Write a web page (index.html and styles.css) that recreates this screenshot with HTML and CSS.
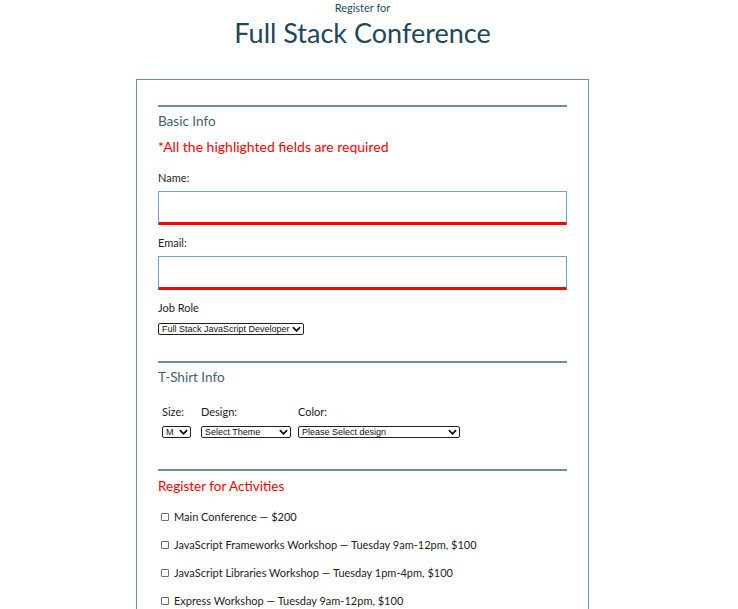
FILE: index.html
```html
<!DOCTYPE html>
<html lang="en">
<head>
<meta charset="utf-8">
<title>Register for Full Stack Conference</title>
<link rel="stylesheet" href="styles.css">
</head>
<body>
<div class="page">
  <header class="header">
    <p class="kicker">Register for</p>
    <h1 class="title">Full Stack Conference</h1>
  </header>
  <form class="form">
    <fieldset class="section">
      <h2 class="legend">Basic Info</h2>
      <p class="error">*All the highlighted fields are required</p>
      <label class="label" for="name">Name:</label>
      <input class="text-input" id="name" type="text">
      <label class="label" for="mail">Email:</label>
      <input class="text-input" id="mail" type="email">
      <label class="label" for="title">Job Role</label>
      <span class="select-wrap">
        <select class="select select-role" id="title">
          <option>Full Stack JavaScript Developer</option>
        </select>
        <svg class="chev" viewBox="0 0 10 6"><path d="M1 1 L5 5 L9 1" /></svg>
      </span>
    </fieldset>
    <fieldset class="section shirt">
      <h2 class="legend">T-Shirt Info</h2>
      <div class="shirt-row">
        <div class="shirt-col shirt-size">
          <label class="label" for="size">Size:</label>
          <span class="select-wrap">
            <select class="select select-size" id="size"><option>M</option></select>
            <svg class="chev" viewBox="0 0 10 6"><path d="M1 1 L5 5 L9 1" /></svg>
          </span>
        </div>
        <div class="shirt-col shirt-design">
          <label class="label" for="design">Design:</label>
          <span class="select-wrap">
            <select class="select select-design" id="design"><option>Select Theme</option></select>
            <svg class="chev" viewBox="0 0 10 6"><path d="M1 1 L5 5 L9 1" /></svg>
          </span>
        </div>
        <div class="shirt-col shirt-color">
          <label class="label" for="color">Color:</label>
          <span class="select-wrap">
            <select class="select select-color" id="color"><option>Please Select design</option></select>
            <svg class="chev" viewBox="0 0 10 6"><path d="M1 1 L5 5 L9 1" /></svg>
          </span>
        </div>
      </div>
    </fieldset>
    <fieldset class="section activities">
      <h2 class="legend legend-error">Register for Activities</h2>
      <label class="activity"><input class="check" type="checkbox"> Main Conference — $200</label>
      <label class="activity"><input class="check" type="checkbox"> JavaScript Frameworks Workshop — Tuesday 9am-12pm, $100</label>
      <label class="activity"><input class="check" type="checkbox"> JavaScript Libraries Workshop — Tuesday 1pm-4pm, $100</label>
      <label class="activity"><input class="check" type="checkbox"> Express Workshop — Tuesday 9am-12pm, $100</label>
      <label class="activity"><input class="check" type="checkbox"> Node.js Workshop — Tuesday 1pm-4pm, $100</label>
    </fieldset>
  </form>
</div>
</body>
</html>
```
FILE: styles.css
```css
html, body {
  margin: 0;
  padding: 0;
  background: #fff;
  overflow: hidden;
}
body {
  width: 725px;
  font-family: "Lato", "Open Sans", sans-serif;
  color: #1f1f1f;
}
.page {
  display: flex;
  flex-direction: column;
  align-items: center;
}
.header {
  text-align: center;
  color: #1f4a5e;
}
.kicker {
  margin: 2px 0 0;
  font-size: 11px;
  line-height: 12px;
}
.title {
  margin: 2px 0 0;
  font-size: 27px;
  font-weight: 400;
  line-height: 34px;
  color: #21475a;
}
.form {
  margin-top: 29px;
  width: 453px;
  border: 1px solid #6a8fa0;
  border-bottom: none;
  padding: 25px 21px 0;
  box-sizing: border-box;
  height: 540px;
}
.section {
  margin: 0;
  padding: 0;
  border: none;
  border-top: 2px solid #6a8fa0;
  display: flex;
  flex-direction: column;
  align-items: flex-start;
}
.section + .section {
  margin-top: 26px;
}
.legend {
  margin: 6px 0 0;
  font-size: 13.5px;
  font-weight: 400;
  line-height: 16px;
  color: #3f5f6f;
}
.legend-error {
  color: #ff0000;
}
.error {
  margin: 10px 0 0;
  font-size: 14px;
  line-height: 16px;
  color: #ff0000;
}
.label {
  display: block;
  margin-top: 11px;
  font-size: 11px;
  line-height: 13px;
  color: #222;
}
.error + .label {
  margin-top: 16px;
}
.text-input {
  display: block;
  width: 100%;
  height: 34px;
  margin: 7px 0 0;
  box-sizing: border-box;
  border: 1px solid #6f9edf;
  border-bottom: 3px solid #ff0000;
  border-radius: 1px;
  padding: 0 8px;
  background: #fff;
}
.select-wrap {
  position: relative;
  display: inline-block;
  margin-top: 9px;
}
.select {
  appearance: none;
  -webkit-appearance: none;
  display: block;
  height: 12px;
  box-sizing: border-box;
  border: 1px solid #222;
  border-radius: 2px;
  background: #fff;
  font-family: "Liberation Sans", Arial, sans-serif;
  font-size: 9px;
  line-height: 10px;
  color: #111;
  padding: 0 0 0 3px;
  margin: 0;
}
.chev {
  position: absolute;
  right: 3px;
  top: 3px;
  width: 9px;
  height: 6px;
  fill: none;
  stroke: #111;
  stroke-width: 2;
  pointer-events: none;
}
.select-role { width: 146px; }
.select-size { width: 29px; }
.select-design { width: 90px; }
.select-color { width: 162px; }
.shirt {
  padding-bottom: 5px;
}
.shirt-row {
  display: flex;
  margin-left: 4px;
}
.shirt-row .label {
  margin-top: 20px;
}
.shirt-row .select-wrap {
  margin-top: 8px;
}
.shirt-col {
  display: flex;
  flex-direction: column;
  align-items: flex-start;
}
.shirt-size {
  margin-right: 10px;
}
.shirt-design {
  margin-right: 7px;
}
.activities .legend {
  margin-top: 7px;
}
.activity {
  display: flex;
  align-items: center;
  margin-top: 12px;
  font-size: 11px;
  line-height: 16px;
  color: #222;
  margin-left: 3px;
  gap: 3px;
}
.activities .legend + .activity {
  margin-top: 15px;
}
.check {
  appearance: none;
  -webkit-appearance: none;
  width: 8px;
  height: 8px;
  margin: 0 2px 0 0;
  border: 1px solid #6d6d6d;
  border-radius: 1px;
  background: #fff;
}
```
